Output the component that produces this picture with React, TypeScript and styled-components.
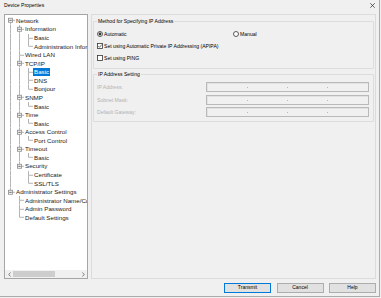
import React from 'react';
import styled, { createGlobalStyle } from 'styled-components';

const ROW_H = 8.565;

const GlobalStyle = createGlobalStyle`
  html, body { margin: 0; padding: 0; background: #f0f0f0; }
  body { font-family: "Liberation Sans", Arial, sans-serif; color: #000; }
  #root { width: 381px; height: 298px; overflow: hidden; }
`;

const Window = styled.div`
  width: 380px;
  height: 297px;
  box-sizing: border-box;
  border-right: 1px solid #ababab;
  border-bottom: 1px solid #ababab;
  background: #f0f0f0;
  display: flex;
  flex-direction: column;
`;

const TitleBar = styled.div`
  height: 14px;
  box-sizing: border-box;
  padding: 2px 4px 0 4px;
  display: flex;
  justify-content: space-between;
  align-items: flex-start;
`;

const Title = styled.span`
  font-size: 5.1px;
  line-height: 6px;
  white-space: nowrap;
`;

const CloseIcon = styled.svg`
  margin-top: 1px;
  display: block;
`;

const Body = styled.div`
  height: 265px;
  display: flex;
  gap: 3px;
  padding-left: 4px;
`;

const TreeBox = styled.div`
  width: 84px;
  height: 100%;
  box-sizing: border-box;
  border: 1px solid #a5a5a5;
  background: #fff;
  display: flex;
  flex-direction: column;
`;

const TreeList = styled.div`
  flex: 1;
  overflow: hidden;
  padding: 1.4px 0 0 1px;
`;

const TreeRow = styled.div`
  height: ${ROW_H}px;
  display: flex;
  align-items: center;
`;

const CellSvg = styled.svg`
  flex: 0 0 9px;
  display: block;
  overflow: visible;
`;

const TreeLabel = styled.span<{ $selected?: boolean }>`
  flex: 0 0 auto;
  white-space: nowrap;
  font-size: 6.2px;
  line-height: 7.6px;
  height: 7.6px;
  padding: 0 1px;
  background: ${(p) => (p.$selected ? '#0078d7' : 'transparent')};
  color: ${(p) => (p.$selected ? '#fff' : '#1a1a1a')};
`;

const HScroll = styled.div`
  height: 8px;
  flex: 0 0 8px;
  display: flex;
  align-items: stretch;
  background: #f0f0f0;
`;

const ScrollBtn = styled.div`
  width: 8px;
  display: flex;
  align-items: center;
  justify-content: center;
`;

const ScrollTrack = styled.div`
  flex: 1;
  display: flex;
  align-items: center;
`;

const Thumb = styled.div`
  width: 42px;
  height: 6px;
  background: #cdcdcd;
`;

const Panel = styled.div`
  width: 285px;
  height: 100%;
  box-sizing: border-box;
  border: 1px solid #dcdcdc;
  padding: 2px 1px 0 1px;
  display: flex;
  flex-direction: column;
`;

const Group = styled.fieldset<{ $gapTop?: number }>`
  margin: ${(p) => p.$gapTop ?? 0}px 0 0 0;
  padding: ${(p) => (p.$gapTop ? '3px 4px 4px 3px' : '4px 4px 6px 3px')};
  border: 1px solid #dcdcdc;
  border-radius: 1px;
  min-width: 0;
`;

const Legend = styled.legend`
  padding: 0 1px;
  font-size: 5.1px;
  line-height: 9px;
  height: 9px;
  color: #000;
  white-space: nowrap;
`;

const OptionStack = styled.div`
  display: flex;
  flex-direction: column;
  gap: 4px;
`;

const OptionRow = styled.div`
  display: flex;
  height: 8px;
  align-items: center;
`;

const Option = styled.label<{ $width?: number }>`
  display: flex;
  align-items: center;
  gap: 1px;
  width: ${(p) => (p.$width ? `${p.$width}px` : 'auto')};
  font-size: 5.1px;
  line-height: 8px;
  white-space: nowrap;
`;

const IconSvg = styled.svg`
  display: block;
  flex: 0 0 auto;
`;

const FieldGrid = styled.div`
  display: grid;
  grid-template-columns: 1fr 163px;
  row-gap: 2.5px;
  align-items: center;
`;

const FieldLabel = styled.span`
  font-size: 5.1px;
  line-height: 10px;
  color: #b2b2b2;
  white-space: nowrap;
`;

const IPBox = styled.div`
  height: 10px;
  box-sizing: border-box;
  border: 1px solid #b9b9b9;
  box-shadow: inset 1px 1px 0 #e2e2e2;
  background: #f0f0f0;
  display: flex;
  align-items: flex-end;
  padding: 0 1px 3px 1px;
`;

const IPSeg = styled.span`
  flex: 1;
`;

const IPDot = styled.span`
  width: 1px;
  height: 1px;
  background: #b8b8b8;
`;

const Footer = styled.div`
  display: flex;
  justify-content: flex-end;
  gap: 5.5px;
  padding: 4px 3px 0 0;
`;

const Button = styled.button<{ $default?: boolean }>`
  width: 47px;
  height: 9.5px;
  box-sizing: border-box;
  margin: 0;
  padding: 0;
  border: 1px solid ${(p) => (p.$default ? '#0078d7' : '#adadad')};
  background: #e1e1e1;
  font-family: "Liberation Sans", Arial, sans-serif;
  font-size: 5px;
  line-height: 7px;
  color: #000;
`;

type TreeNode = { label: string; level: number; expandable?: boolean; selected?: boolean };

const nodes: TreeNode[] = [
  { label: 'Network', level: 0, expandable: true },
  { label: 'Information', level: 1, expandable: true },
  { label: 'Basic', level: 2 },
  { label: 'Administration Information', level: 2 },
  { label: 'Wired LAN', level: 1 },
  { label: 'TCP/IP', level: 1, expandable: true },
  { label: 'Basic', level: 2, selected: true },
  { label: 'DNS', level: 2 },
  { label: 'Bonjour', level: 2 },
  { label: 'SNMP', level: 1, expandable: true },
  { label: 'Basic', level: 2 },
  { label: 'Time', level: 1, expandable: true },
  { label: 'Basic', level: 2 },
  { label: 'Access Control', level: 1, expandable: true },
  { label: 'Port Control', level: 2 },
  { label: 'Timeout', level: 1, expandable: true },
  { label: 'Basic', level: 2 },
  { label: 'Security', level: 1, expandable: true },
  { label: 'Certificate', level: 2 },
  { label: 'SSL/TLS', level: 2 },
  { label: 'Administrator Settings', level: 0, expandable: true },
  { label: 'Administrator Name/Comment', level: 1 },
  { label: 'Admin Password', level: 1 },
  { label: 'Default Settings', level: 1 },
];

const hasNextSibling = (i: number) => {
  const lv = nodes[i].level;
  for (let j = i + 1; j < nodes.length; j++) {
    if (nodes[j].level <= lv) return nodes[j].level === lv;
  }
  return false;
};

const ancestorAt = (i: number, k: number) => {
  for (let j = i - 1; j >= 0; j--) {
    if (nodes[j].level === k) return j;
  }
  return -1;
};

const LINE = '#b4b4b4';

type CellProps = { up?: boolean; down?: boolean; across?: boolean; expander?: boolean };

const Cell = ({ up, down, across, expander }: CellProps) => {
  const mid = ROW_H / 2;
  return (
    <CellSvg width={9} height={ROW_H} viewBox={`0 0 9 ${ROW_H}`}>
      {up && <line x1={4.5} y1={0} x2={4.5} y2={mid} stroke={LINE} strokeWidth={1} />}
      {down && <line x1={4.5} y1={mid} x2={4.5} y2={ROW_H} stroke={LINE} strokeWidth={1} />}
      {across && <line x1={4.5} y1={mid} x2={9} y2={mid} stroke={LINE} strokeWidth={1} />}
      {expander && (
        <g>
          <rect x={2.5} y={mid - 2} width={4} height={4} fill="#fff" stroke="#969696" strokeWidth={0.9} />
          <line x1={3.3} y1={mid} x2={5.7} y2={mid} stroke="#333" strokeWidth={0.8} />
        </g>
      )}
    </CellSvg>
  );
};

const TreeRowView = ({ index }: { index: number }) => {
  const n = nodes[index];
  const cells: React.ReactNode[] = [];
  for (let k = 0; k < n.level; k++) {
    const a = ancestorAt(index, k);
    const pipe = a >= 0 && hasNextSibling(a);
    cells.push(<Cell key={k} up={pipe} down={pipe} />);
  }
  const isFirstRoot = n.level === 0 && index === 0;
  cells.push(
    <Cell
      key="own"
      up={!isFirstRoot}
      down={hasNextSibling(index)}
      across
      expander={n.expandable}
    />
  );
  return (
    <TreeRow>
      {cells}
      <TreeLabel $selected={n.selected}>{n.label}</TreeLabel>
    </TreeRow>
  );
};

const Radio = ({ checked }: { checked?: boolean }) => (
  <IconSvg width={6} height={6} viewBox="0 0 6 6">
    <circle cx={3} cy={3} r={2.5} fill="#fff" stroke="#333" strokeWidth={0.8} />
    {checked && <circle cx={3} cy={3} r={1.4} fill="#333" />}
  </IconSvg>
);

const Check = ({ checked }: { checked?: boolean }) => (
  <IconSvg width={6} height={6} viewBox="0 0 6 6">
    <rect x={0.5} y={0.5} width={5} height={5} fill="#fff" stroke="#333" strokeWidth={0.8} />
    {checked && (
      <polyline points="1.3,3 2.5,4.3 4.8,1.5" fill="none" stroke="#333" strokeWidth={0.7} />
    )}
  </IconSvg>
);

const IPField = () => (
  <IPBox>
    <IPSeg />
    <IPDot />
    <IPSeg />
    <IPDot />
    <IPSeg />
    <IPDot />
    <IPSeg />
  </IPBox>
);

const Chevron = ({ dir }: { dir: 'left' | 'right' }) => (
  <svg width={3} height={5} viewBox="0 0 3 5">
    <polyline
      points={dir === 'left' ? '2.5,0.5 0.8,2.5 2.5,4.5' : '0.5,0.5 2.2,2.5 0.5,4.5'}
      fill="none"
      stroke="#606060"
      strokeWidth={0.8}
    />
  </svg>
);

export default function App() {
  return (
    <>
      <GlobalStyle />
      <Window>
        <TitleBar>
          <Title>Device Properties</Title>
          <CloseIcon width={5} height={5} viewBox="0 0 5 5">
            <line x1={0.3} y1={0.3} x2={4.7} y2={4.7} stroke="#222" strokeWidth={0.7} />
            <line x1={4.7} y1={0.3} x2={0.3} y2={4.7} stroke="#222" strokeWidth={0.7} />
          </CloseIcon>
        </TitleBar>
        <Body>
          <TreeBox>
            <TreeList>
              {nodes.map((_, i) => (
                <TreeRowView key={i} index={i} />
              ))}
            </TreeList>
            <HScroll>
              <ScrollBtn>
                <Chevron dir="left" />
              </ScrollBtn>
              <ScrollTrack>
                <Thumb />
              </ScrollTrack>
              <ScrollBtn>
                <Chevron dir="right" />
              </ScrollBtn>
            </HScroll>
          </TreeBox>
          <Panel>
            <Group>
              <Legend>Method for Specifying IP Address</Legend>
              <OptionStack>
                <OptionRow>
                  <Option $width={136}>
                    <Radio checked />
                    Automatic
                  </Option>
                  <Option>
                    <Radio />
                    Manual
                  </Option>
                </OptionRow>
                <OptionRow>
                  <Option>
                    <Check checked />
                    Set using Automatic Private IP Addressing (APIPA)
                  </Option>
                </OptionRow>
                <OptionRow>
                  <Option>
                    <Check />
                    Set using PING
                  </Option>
                </OptionRow>
              </OptionStack>
            </Group>
            <Group $gapTop={1}>
              <Legend>IP Address Setting</Legend>
              <FieldGrid>
                <FieldLabel>IP Address:</FieldLabel>
                <IPField />
                <FieldLabel>Subnet Mask:</FieldLabel>
                <IPField />
                <FieldLabel>Default Gateway:</FieldLabel>
                <IPField />
              </FieldGrid>
            </Group>
          </Panel>
        </Body>
        <Footer>
          <Button $default>Transmit</Button>
          <Button>Cancel</Button>
          <Button>Help</Button>
        </Footer>
      </Window>
    </>
  );
}
